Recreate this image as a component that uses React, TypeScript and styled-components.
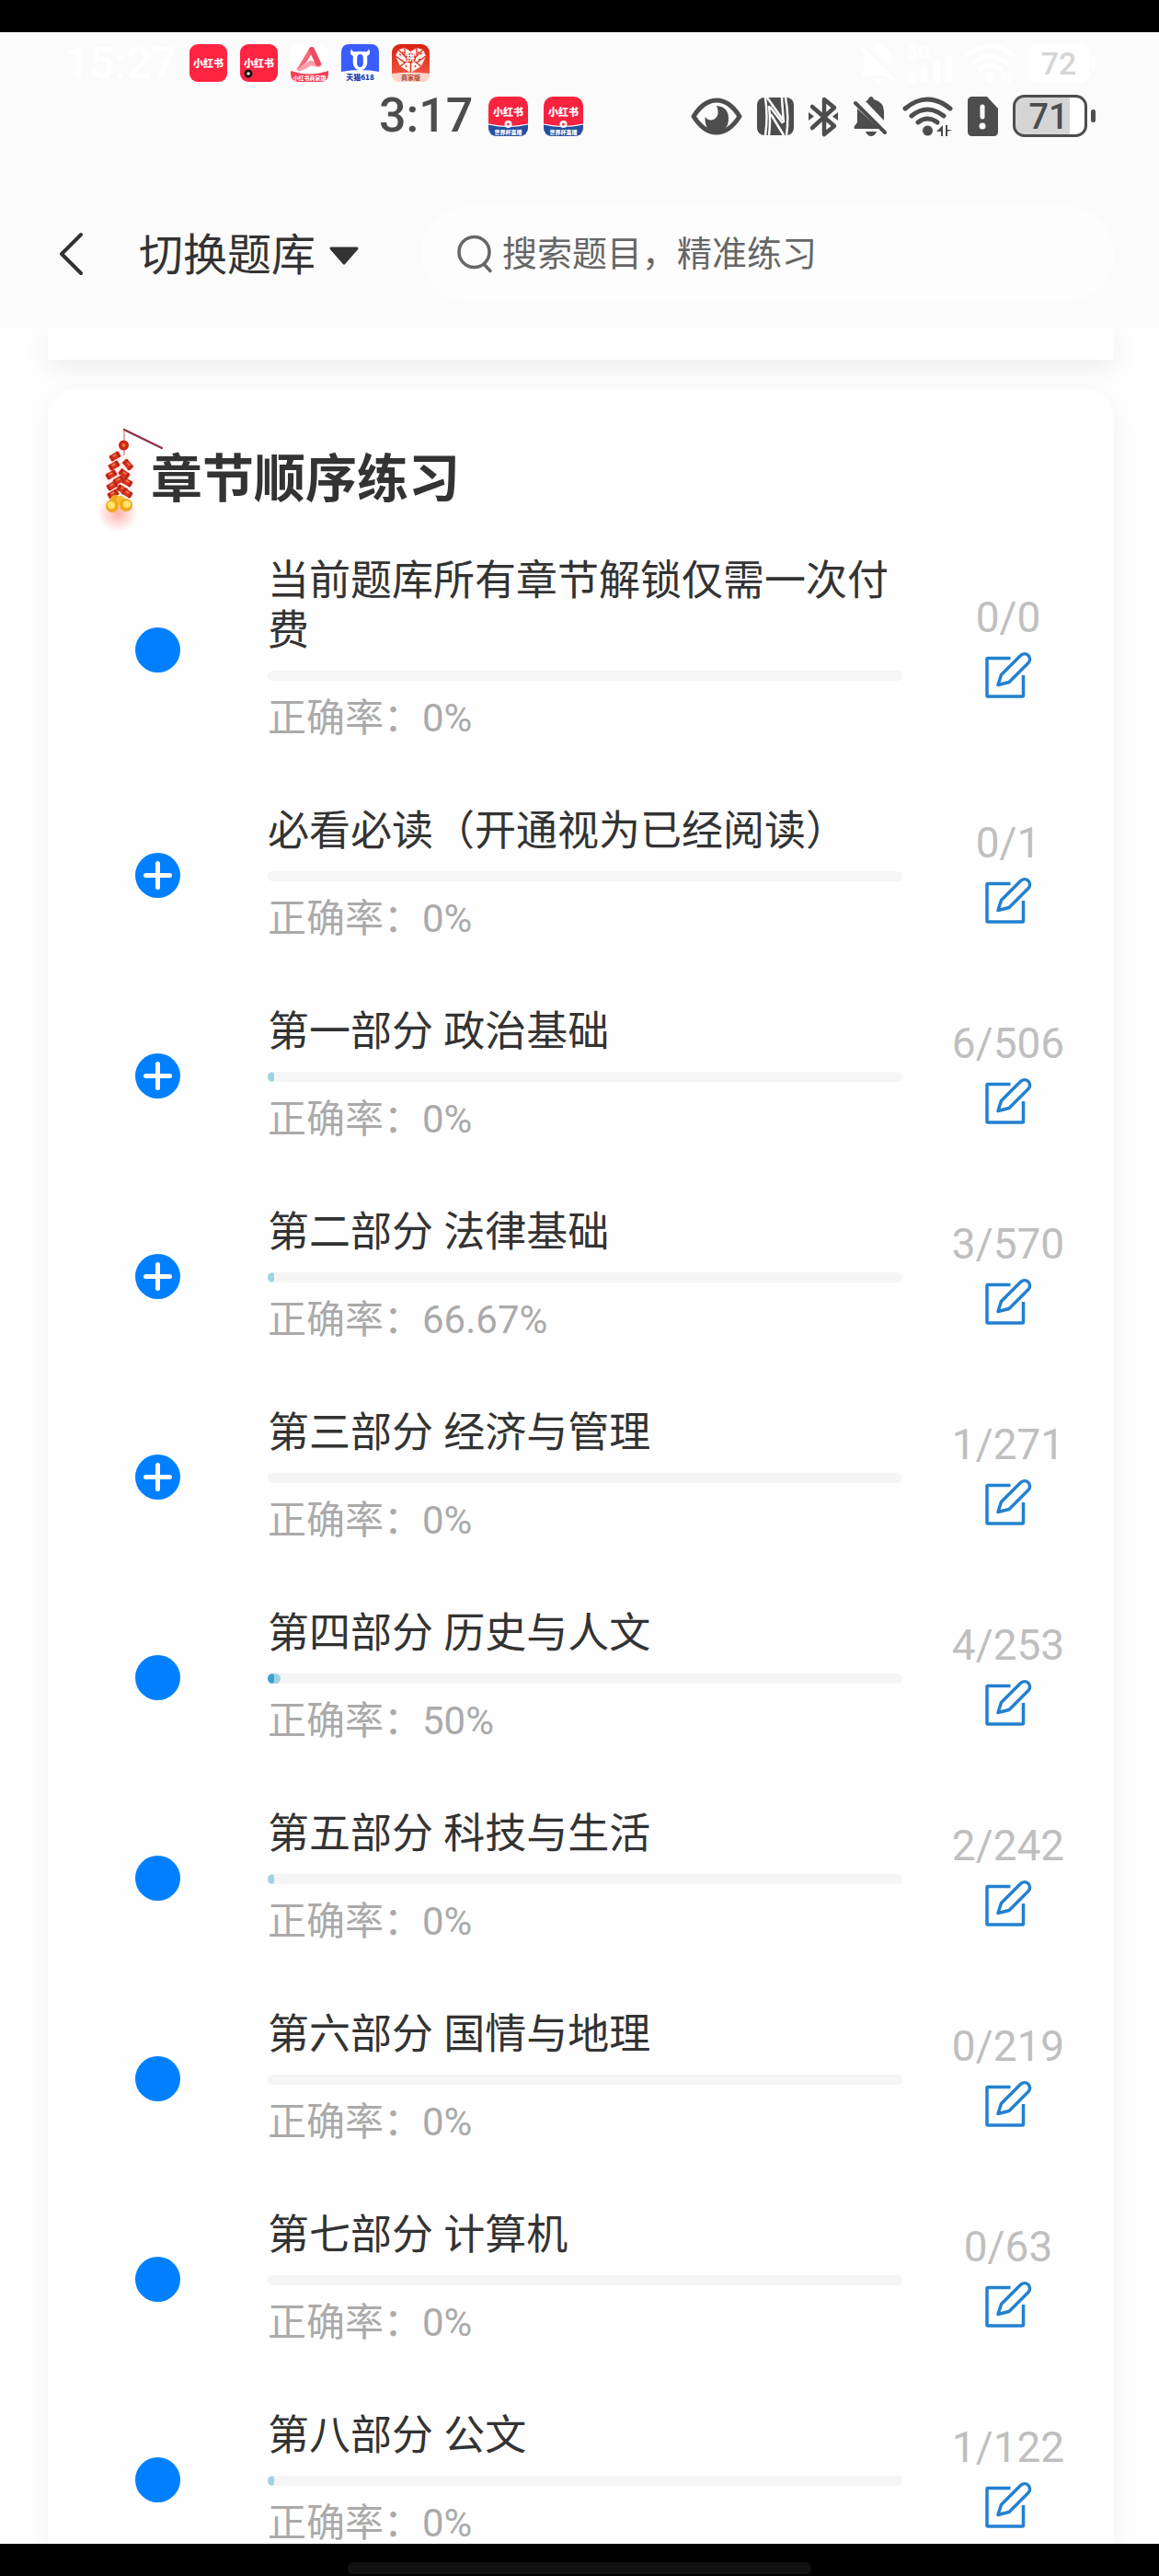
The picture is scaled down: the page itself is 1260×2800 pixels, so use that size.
import React from "react";
import styled, { createGlobalStyle } from "styled-components";

const GlobalStyle = createGlobalStyle`
  * { box-sizing: border-box; }
  body {
    margin: 0;
    background: #fefefe;
    color: #333;
    font-family: Roboto, "Noto Sans CJK SC", sans-serif;
  }
  button {
    padding: 0;
    border: 0;
    background: none;
    color: inherit;
    font: inherit;
    cursor: pointer;
  }
  svg { display: block; flex: none; overflow: visible; }
`;

const Screen = styled.div`
  display: flex;
  flex-direction: column;
  height: 100vh;
  overflow: hidden;
`;

const Bezel = styled.div`
  flex: none;
  height: 35px;
  background: #000;
`;

const HomeBar = styled(Bezel)`
  display: flex;
  justify-content: center;
  align-items: flex-end;
  padding-bottom: 2px;
`;

const HomeHandle = styled.div`
  width: 40%;
  height: 13px;
  border-radius: 6px;
  background: #111;
`;

const Top = styled.header`
  flex: none;
  background: #fbfbfb;
`;

const StatusRow = styled.div<{ $height: number; $start: number }>`
  display: flex;
  align-items: center;
  justify-content: space-between;
  height: ${(p) => p.$height}px;
  padding: 0 69px 0 ${(p) => p.$start}px;
`;

const StatusGroup = styled.div<{ $gap: number }>`
  display: flex;
  align-items: center;
  gap: ${(p) => p.$gap}px;
`;

const Clock = styled.time<{ $faded?: boolean }>`
  font-size: ${(p) => (p.$faded ? 48 : 52)}px;
  line-height: 54px;
  font-weight: 500;
  color: ${(p) => (p.$faded ? "#fff" : "#4d4d4d")};
`;

const NavBar = styled.nav`
  display: flex;
  align-items: center;
  padding: 74px 49px 29px 52px;
`;

const BackButton = styled.button`
  width: 99px;
  padding-left: 12px;
`;

const BankButton = styled.button`
  display: flex;
  align-items: center;
  gap: 15px;
  padding-top: 3px;
  font-size: 48px;
  line-height: 54px;
  white-space: nowrap;
`;

const SearchBox = styled.label`
  flex: 1;
  display: flex;
  align-items: center;
  gap: 10px;
  height: 104px;
  margin-left: 68px;
  padding: 0 39px;
  border-radius: 52px;
  background: #fdfdfd;
`;

const SearchInput = styled.input`
  flex: 1;
  min-width: 0;
  padding: 0;
  border: 0;
  outline: 0;
  background: none;
  font: inherit;
  font-size: 38px;
  line-height: 54px;
  color: #666;
  &::placeholder {
    color: #666;
    opacity: 1;
  }
`;

const Content = styled.main`
  flex: 1;
  min-height: 0;
  padding: 0 49px 0 52px;
  overflow-y: auto;
  scrollbar-width: none;
`;

const PreviousCard = styled.section`
  height: 34px;
  margin-bottom: 31px;
  background: #fefefe;
  box-shadow: 0 8px 30px rgba(0, 0, 0, 0.08);
`;

const Card = styled.section`
  position: relative;
  padding-bottom: 32px;
  border-radius: 32px;
  background: #fefefe;
  box-shadow: 0 8px 30px rgba(0, 0, 0, 0.05);
`;

const CardHead = styled.div`
  display: flex;
  align-items: center;
  padding: 44px 60px 0;
`;

const CardTitle = styled.h2`
  margin: 0;
  padding-top: 6px;
  font-size: 56px;
  line-height: 66px;
  font-weight: 700;
`;

const ChapterList = styled.ul`
  margin: 0;
  padding: 0;
  list-style: none;
`;

const Chapter = styled.li`
  display: grid;
  grid-template-columns: 239px 1fr 230px;
  align-items: center;
  padding: 33px 0 32px;
`;

const Toggle = styled.button`
  display: grid;
  place-items: center;
  justify-self: center;
  width: 49px;
  height: 49px;
  border-radius: 50%;
  background: #0080ff;
`;

const ChapterName = styled.h3`
  margin: 0;
  padding: 2px 0 16px;
  font-size: 45px;
  line-height: 54px;
  font-weight: 400;
`;

const Track = styled.div`
  position: relative;
  height: 11px;
  margin-bottom: 12px;
  border-radius: 6px;
  background: #f5f5f5;
  overflow: hidden;
`;

const Fill = styled.div<{ $color: string }>`
  position: absolute;
  inset: 0 auto 0 0;
  border-radius: 6px;
  background: ${(p) => p.$color};
`;

const Accuracy = styled.p`
  margin: 0;
  font-size: 42px;
  line-height: 58px;
  color: #aaa;
`;

const Practice = styled.div`
  display: flex;
  flex-direction: column;
  align-items: center;
`;

const Count = styled.span`
  font-size: 46px;
  line-height: 54px;
  color: #bfbfbf;
`;

const EditButton = styled.button`
  display: grid;
  place-items: center;
  width: 72px;
  height: 72px;
`;

const cjk = '"Noto Sans CJK SC", sans-serif';

function RedNoteIcon({ dot }: { dot?: boolean }) {
  return (
    <svg width="41" height="41" viewBox="0 0 41 41">
      <rect width="41" height="41" rx="9" fill="#ff2442" />
      <text x="20.5" y="25" fontSize="11" fontWeight="900" fill="#fff" textAnchor="middle" fontFamily={cjk}>小红书</text>
      {dot && (
        <>
          <circle cx="9" cy="32" r="4.5" fill="#111" />
          <circle cx="9" cy="32" r="1.8" fill="#ddd" />
        </>
      )}
    </svg>
  );
}

function MerchantIcon() {
  return (
    <svg width="41" height="41" viewBox="0 0 41 41">
      <rect width="41" height="41" rx="9" fill="#fff" />
      <path d="M9 27q9-3 13-7 4 3 9 2" fill="none" stroke="#ff9fa9" strokeWidth="5" strokeLinecap="round" strokeLinejoin="round" />
      <path d="M7 27 20 5q3-4 6 0L17 20z" fill="#f5687a" />
      <path d="m23 6 7 15" stroke="#f04a60" strokeWidth="6" strokeLinecap="round" />
      <path d="M0 29q20 7 41 0v3q0 9-9 9H9q-9 0-9-9z" fill="#f43f56" />
      <text x="20.5" y="39" fontSize="6" fontWeight="700" fill="#fff" textAnchor="middle" fontFamily={cjk}>小红书商家版</text>
    </svg>
  );
}

function TmallIcon() {
  return (
    <svg width="41" height="41" viewBox="0 0 41 41">
      <rect width="41" height="41" rx="9" fill="#fff" />
      <path d="M0 30V9q0-9 9-9h23q9 0 9 9v21q-20-4-41 0z" fill="#3a5dfb" />
      <rect x="15" y="10" width="11" height="16" rx="5.500" fill="none" stroke="#fff" strokeWidth="4.500" />
      <path d="M11 5q1 4 5 3h9q4 1 5-3 3 6-2 8H13Q8 11 11 5z" fill="#fff" />
      <path d="M20.500 14v8" stroke="#3a5dfb" strokeWidth="6" strokeLinecap="round" />
      <text x="20.5" y="39" fontSize="8" fontWeight="900" fill="#1c3fae" textAnchor="middle" fontFamily={cjk}>天猫618</text>
    </svg>
  );
}

function PddIcon() {
  return (
    <svg width="41" height="41" viewBox="0 0 41 41">
      <defs>
        <linearGradient id="pdd" x1="0" y1="0" x2="0" y2="1">
          <stop offset="0" stopColor="#dc1e10" />
          <stop offset="1" stopColor="#f4644c" />
        </linearGradient>
      </defs>
      <rect width="41" height="41" rx="9" fill="url(#pdd)" />
      <path d="M20.500 31 9 24 4 13 7 6l7-2 6.500 4L27 4l7 2 3 7-5 11z" fill="#fff1ec" />
      <path d="m4 13 10 7M7 6l9 9M14 4v8m13-8v8m7-6-9 9m12-2-10 7M9 24l7-5m4.500 12V20M32 24l-7-5M8 11l2 1m0 5 2 1m19-7 2-1m-4 7 2-1M12 8v2m17-2v2M15 23l1 2m10-2-1 2" stroke="#dc2c1c" strokeWidth="1.300" />
      <circle cx="20.500" cy="15" r="5.500" fill="#dc2c1c" />
      <text x="20.5" y="18" fontSize="9" fontWeight="900" fill="#fff" textAnchor="middle" fontFamily={cjk}>拼</text>
      <path d="M0 32q20-3 41 0 0 9-9 9H9q-9 0-9-9z" fill="#fcd5ca" />
      <text x="20.5" y="39" fontSize="7" fontWeight="700" fill="#a8412f" textAnchor="middle" fontFamily={cjk}>商家版</text>
    </svg>
  );
}

function RedNoteLiveIcon() {
  return (
    <svg width="43" height="43" viewBox="0 0 43 43">
      <rect width="43" height="43" rx="10" fill="#f8233f" />
      <path d="M0 30q21 5 43 0v3q0 10-10 10H10Q0 43 0 33z" fill="#2450a0" />
      <path d="M0 30q21 5 43 0" fill="none" stroke="#fff" strokeWidth="1.200" />
      <circle cx="21.500" cy="30" r="4" fill="#fff" />
      <circle cx="21.500" cy="30" r="1.600" fill="#d7485c" />
      <text x="21.5" y="21" fontSize="11" fontWeight="900" fill="#fff" textAnchor="middle" fontFamily={cjk}>小红书</text>
      <text x="21.5" y="41" fontSize="6" fontWeight="900" fill="#fff" textAnchor="middle" fontFamily={cjk}>世界杯直播</text>
    </svg>
  );
}

function BellOff({ color }: { color: string }) {
  return (
    <svg width="38" height="43" viewBox="0 0 38 43">
      <path d="M5 13 29 35H2q-1-1 0-3l3-4zM14 5q3-1 4-4 2-2 4 0l1 2q11 3 11 13v10z" fill={color} />
      <path d="m3 7 32 32" stroke={color} strokeWidth="4" strokeLinecap="round" />
      <path d="M14 38h12q-2 5-6 5t-6-5z" fill={color} />
    </svg>
  );
}

function Wifi({ color }: { color: string }) {
  return (
    <svg width="55" height="43" viewBox="0 0 55 43">
      <g fill="none" stroke={color} strokeWidth="5" strokeLinecap="round">
        <path d="M3 13q24-20 49 0" />
        <path d="M10 21q17-14 35 0" />
        <path d="M17 28q10-8 21 0" />
      </g>
      <circle cx="27.500" cy="37" r="5.500" fill={color} />
      <path d="M37 38h5v5h2V31zM47 31v12h2v-5l5-2h-5v-5z" fill={color} />
    </svg>
  );
}

function Signal() {
  return (
    <svg width="50" height="43" viewBox="0 0 50 43">
      <text x="0" y="17" fontSize="20" fontWeight="700" fill="#fff" fontFamily="Roboto, sans-serif">5G</text>
      <path d="M2 31h7v11H2zM15 26h7v16h-7zM29 20h7v22h-7zM42 13h7v29h-7z" fill="#fff" />
    </svg>
  );
}

function Eye() {
  return (
    <svg width="56" height="43" viewBox="0 0 56 43">
      <path d="M3 21.500Q14 4 28 4t25 17.500Q42 39 28 39T3 21.500z" fill="none" stroke="#4d4d4d" strokeWidth="5" strokeLinejoin="round" />
      <path d="M28 10q13 1 13 14T28 38 15.500 22q4 5 9 3 8-4 3.500-15z" fill="#4d4d4d" />
    </svg>
  );
}

function Nfc() {
  return (
    <svg width="40" height="41" viewBox="0 0 40 41">
      <rect width="40" height="41" rx="8" fill="#4d4d4d" />
      <g fill="none" stroke="#fbfbfb" strokeWidth="2.500">
        <path d="M9 0q3 21 0 41" />
        <path d="M13 9q2 17 0 32" />
        <path d="M27 0q1 17 2 27" />
        <path d="M31 0q4 22 1 41" />
        <path d="m11 0 17 24" />
        <path d="m14 10 14 18" />
        <path d="m15 18 14 23" />
      </g>
    </svg>
  );
}

function Bluetooth() {
  return (
    <svg width="32" height="43" viewBox="0 0 32 43">
      <path d="m4 11 24 21-11 9V3l11 9L4 34" fill="none" stroke="#4d4d4d" strokeWidth="4.500" strokeLinecap="round" strokeLinejoin="round" />
      <path d="m0 17 6 4.500L0 26zM32 17l-6 4.500 6 4.500z" fill="#4d4d4d" />
    </svg>
  );
}

function SimAlert() {
  return (
    <svg width="33" height="43" viewBox="0 0 33 43">
      <path d="M5 0h16l12 13v25q0 5-5 5H5q-5 0-5-5V5q0-5 5-5z" fill="#4d4d4d" />
      <path d="M16 11v11" stroke="#fff" strokeWidth="5" strokeLinecap="round" />
      <circle cx="16" cy="32" r="3.500" fill="#fff" />
    </svg>
  );
}

function Battery() {
  return (
    <svg width="90" height="46" viewBox="0 0 90 46">
      <rect x="1.500" y="1.500" width="78" height="43" rx="11" fill="#fff" />
      <path d="M13 3h49v40H13Q3 43 3 33V13Q3 3 13 3z" fill="#d5d5d5" />
      <rect x="1.500" y="1.500" width="78" height="43" rx="11" fill="none" stroke="#4d4d4d" strokeWidth="3" />
      <rect x="85" y="16" width="5" height="14" rx="2.500" fill="#4d4d4d" />
      <text x="39" y="37" fontSize="38" fontWeight="500" fill="#4d4d4d" textAnchor="middle" fontFamily="Roboto, sans-serif">71</text>
    </svg>
  );
}

function BatteryFaded() {
  return (
    <svg width="74" height="43" viewBox="0 0 74 43">
      <rect width="68" height="43" rx="11" fill="#fff" />
      <rect x="69" y="14" width="5" height="15" rx="2.500" fill="#fff" />
      <text x="34" y="34" fontSize="34" fontWeight="500" fill="#d5d5d5" textAnchor="middle" fontFamily="Roboto, sans-serif">72</text>
    </svg>
  );
}

function Firecracker() {
  const sticks = [
    [13, 30, -30], [12, 40, -30], [27, 39, 50], [9, 50, -30], [23, 49, 35],
    [26, 58, 30], [17, 56, -30], [10, 62, -30], [21, 66, 30], [26, 70, 30], [11, 71, -30],
  ];
  return (
    <svg width="52" height="104" viewBox="0 0 52 104">
      <defs>
        <radialGradient id="glow">
          <stop offset="0" stopColor="#ff5a4a" stopOpacity="0.450" />
          <stop offset="1" stopColor="#ff5a4a" stopOpacity="0" />
        </radialGradient>
      </defs>
      <ellipse cx="16" cy="92" rx="22" ry="20" fill="url(#glow)" />
      <ellipse cx="17" cy="54" rx="22" ry="42" fill="url(#glow)" opacity="0.350" />
      <path d="m23 1 41 20" stroke="#8f3346" strokeWidth="2.500" strokeLinecap="round" />
      <path d="M23 1v28" stroke="#c0625c" strokeWidth="1" />
      <circle cx="22.500" cy="18" r="5.500" fill="#c92a17" />
      <circle cx="22.500" cy="18" r="2" fill="#f2772e" />
      {sticks.map(([x, y, angle]) => (
        <g key={`${x}-${y}`} transform={`rotate(${angle} ${x} ${y})`}>
          <rect x={x - 6} y={y - 3.5} width="12" height="7" rx="1.500" fill="#d5341f" />
          <path d={`M${x + 4} ${y - 3.5}v7M${x - 4} ${y - 3.5}v7`} stroke="#a61d12" strokeWidth="1.200" />
          <path d={`M${x - 2} ${y - 1}h4`} stroke="#f58a5c" strokeWidth="1.200" />
        </g>
      ))}
      <circle cx="13" cy="77" r="5" fill="#f5a81c" />
      <circle cx="19" cy="78" r="5" fill="#f7bd2c" />
      <circle cx="10" cy="84" r="7" fill="#efa91b" />
      <circle cx="25" cy="83" r="7" fill="#efa91b" />
      <circle cx="9" cy="83" r="4" fill="#ffe568" />
      <circle cx="26" cy="82" r="4" fill="#ffe568" />
    </svg>
  );
}

function EditIcon() {
  return (
    <svg width="50" height="50" viewBox="0 0 50 50" fill="none" stroke="#2380cf" strokeWidth="3.500" strokeLinejoin="round">
      <path d="M27.500 6.500H3q-1 0-1 1V47q0 1 1 1h37.500q1 0 1-1V25" />
      <path d="m14 35.500 3.500-11L38.500 3.500a5.500 5.500 0 0 1 8.500 8L26 32.500z" />
    </svg>
  );
}

type ChapterData = {
  name: string;
  done: number;
  total: number;
  correct: number;
  expandable?: boolean;
};

const chapters: ChapterData[] = [
  { name: "当前题库所有章节解锁仅需一次付费", done: 0, total: 0, correct: 0 },
  { name: "必看必读（开通视为已经阅读）", done: 0, total: 1, correct: 0, expandable: true },
  { name: "第一部分 政治基础", done: 6, total: 506, correct: 0, expandable: true },
  { name: "第二部分 法律基础", done: 3, total: 570, correct: 2, expandable: true },
  { name: "第三部分 经济与管理", done: 1, total: 271, correct: 0, expandable: true },
  { name: "第四部分 历史与人文", done: 4, total: 253, correct: 2 },
  { name: "第五部分 科技与生活", done: 2, total: 242, correct: 0 },
  { name: "第六部分 国情与地理", done: 0, total: 219, correct: 0 },
  { name: "第七部分 计算机", done: 0, total: 63, correct: 0 },
  { name: "第八部分 公文", done: 1, total: 122, correct: 0 },
];

const share = (part: number, whole: number) => (whole ? Math.round((part / whole) * 100) : 0);

const accuracy = (c: ChapterData) =>
  c.done ? `${Number(((c.correct / c.done) * 100).toFixed(2))}%` : "0%";

function ChapterRow({ chapter }: { chapter: ChapterData }) {
  return (
    <Chapter>
      <Toggle aria-label={`展开 ${chapter.name}`}>
        {chapter.expandable && (
          <svg width="31" height="31" viewBox="0 0 31 31">
            <path d="M15.500 2.500v26M2.500 15.500h26" stroke="#fff" strokeWidth="5" strokeLinecap="round" />
          </svg>
        )}
      </Toggle>
      <div>
        <ChapterName>{chapter.name}</ChapterName>
        <Track>
          <Fill $color="#9fd3e2" style={{ width: `${share(chapter.done, chapter.total)}%` }} />
          <Fill $color="#3ba3d0" style={{ width: `${share(chapter.correct, chapter.total)}%` }} />
        </Track>
        <Accuracy>正确率：{accuracy(chapter)}</Accuracy>
      </div>
      <Practice>
        <Count>{chapter.done}/{chapter.total}</Count>
        <EditButton aria-label={`练习 ${chapter.name}`}>
          <EditIcon />
        </EditButton>
      </Practice>
    </Chapter>
  );
}

export default function App() {
  return (
    <Screen>
      <GlobalStyle />
      <Bezel />
      <Top>
        <StatusRow $height={67} $start={70}>
          <StatusGroup $gap={14}>
            <Clock $faded>15:27</Clock>
            <RedNoteIcon />
            <RedNoteIcon dot />
            <MerchantIcon />
            <TmallIcon />
            <PddIcon />
          </StatusGroup>
          <StatusGroup $gap={13}>
            <BellOff color="#fff" />
            <Signal />
            <Wifi color="#fff" />
            <BatteryFaded />
          </StatusGroup>
        </StatusRow>
        <StatusRow $height={48} $start={412}>
          <StatusGroup $gap={17}>
            <Clock>3:17</Clock>
            <RedNoteLiveIcon />
            <RedNoteLiveIcon />
          </StatusGroup>
          <StatusGroup $gap={16}>
            <Eye />
            <Nfc />
            <Bluetooth />
            <BellOff color="#4d4d4d" />
            <Wifi color="#4d4d4d" />
            <SimAlert />
            <Battery />
          </StatusGroup>
        </StatusRow>
        <NavBar>
          <BackButton aria-label="返回">
            <svg width="27" height="46" viewBox="0 0 27 46">
              <path d="M24 2 3 23l21 21" fill="none" stroke="#333" strokeWidth="4" strokeLinecap="round" strokeLinejoin="round" />
            </svg>
          </BackButton>
          <BankButton>
            切换题库
            <svg width="32" height="20" viewBox="0 0 32 20">
              <path d="M2 2h28L16 18z" fill="#333" stroke="#333" strokeWidth="3" strokeLinejoin="round" />
            </svg>
          </BankButton>
          <SearchBox>
            <svg width="39" height="42" viewBox="0 0 39 42" fill="none" stroke="#666" strokeWidth="3.500" strokeLinecap="round">
              <circle cx="18.500" cy="19" r="16.500" />
              <path d="m29 32 7 7.500" />
            </svg>
            <SearchInput type="search" aria-label="搜索题目" placeholder="搜索题目，精准练习" />
          </SearchBox>
        </NavBar>
      </Top>
      <Content>
        <PreviousCard />
        <Card>
          <CardHead>
            <Firecracker />
            <CardTitle>章节顺序练习</CardTitle>
          </CardHead>
          <ChapterList>
            {chapters.map((c) => (
              <ChapterRow key={c.name} chapter={c} />
            ))}
          </ChapterList>
        </Card>
      </Content>
      <HomeBar>
        <HomeHandle />
      </HomeBar>
    </Screen>
  );
}
